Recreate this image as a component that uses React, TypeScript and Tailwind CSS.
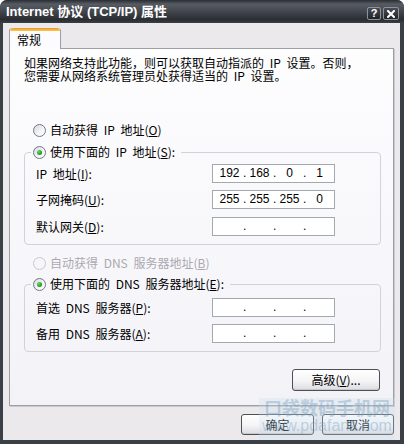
import React from "react";

const CJK = "font-['Noto_Sans_CJK_SC',sans-serif]";

function Radio({ checked, disabled }: { checked?: boolean; disabled?: boolean }) {
  return (
    <span
      className={
        "relative inline-flex h-[13px] w-[13px] shrink-0 items-center justify-center rounded-full border " +
        (disabled
          ? "border-[#cac8cf] bg-[#f6f5f8]"
          : "border-[#6f7a86] bg-[linear-gradient(135deg,#d6d6da_0%,#f2f2f4_50%,#ffffff_100%)]")
      }
    >
      {checked && (
        <span className="h-[5px] w-[5px] rounded-full bg-[radial-gradient(circle_at_35%_35%,#6fd36f_0%,#21a121_60%,#137a13_100%)]" />
      )}
    </span>
  );
}

function IpBox({ parts }: { parts: string[] }) {
  return (
    <div className="flex h-[19px] w-[123px] items-center border border-[#a3a9b0] bg-white pl-[3px] font-['Liberation_Sans',sans-serif] text-[12px] leading-[17px] text-black [word-spacing:0px]">
      {parts.map((p, i) => (
        <React.Fragment key={i}>
          <span className="w-[27px] text-center">{p}</span>
          {i < 3 && <span className="w-[3px] text-center">.</span>}
        </React.Fragment>
      ))}
    </div>
  );
}

function Row({ label, parts, className }: { label: React.ReactNode; parts: string[]; className?: string }) {
  return (
    <div className={"flex h-[19px] items-center " + (className ?? "")}>
      <span className="w-[176px] leading-[16px]">{label}</span>
      <IpBox parts={parts} />
    </div>
  );
}

function Acc({ c }: { c: string }) {
  return (
    <>
      (<span className="underline underline-offset-1">{c}</span>)
    </>
  );
}

function PushButton({ children, w }: { children: React.ReactNode; w: string }) {
  return (
    <div
      className={
        "flex h-[21px] items-center justify-center rounded-[3px] border border-[#4b4f56] bg-[linear-gradient(to_bottom,#ffffff_0%,#f4f4f6_55%,#dcdbe1_100%)] text-[12px] leading-[16px] text-black shadow-[inset_0_-1px_0_#c9c8cf] " +
        w
      }
    >
      {children}
    </div>
  );
}

export default function App() {
  return (
    <div className={"relative h-[444px] w-[404px] bg-white " + CJK}>
      <div className="flex h-[444px] w-[404px] flex-col overflow-hidden rounded-t-[7px] bg-[#3b3f46]">
        {/* Title bar */}
        <div className="flex h-[23px] shrink-0 items-start bg-[linear-gradient(to_bottom,#2a2d32_0%,#575b63_18%,#42464d_50%,#2a2d32_85%,#3a3e45_100%)] pl-[6px] pr-[5px]">
          <div className="mt-[4px] flex-1 font-['Liberation_Sans','Noto_Sans_CJK_SC',sans-serif] text-[13px] font-bold leading-[16px] text-white">
            Internet 协议 (TCP/IP) 属性
          </div>
          <div className="mt-[7px] flex gap-[2px]">
            <div className="flex h-[13px] w-[14px] items-center justify-center rounded-[2px] border border-[#8d939b] bg-[linear-gradient(to_bottom,#4a4e55,#1f2226)] font-['Liberation_Sans',sans-serif] text-[11px] font-bold leading-none text-white">
              ?
            </div>
            <div className="flex h-[13px] w-[16px] items-center justify-center rounded-[2px] border border-[#8d939b] bg-[linear-gradient(to_bottom,#4a4e55,#1f2226)]">
              <svg width="8" height="8" viewBox="0 0 8 8">
                <path d="M1 1 L7 7 M7 1 L1 7" stroke="white" strokeWidth="2" strokeLinecap="square" />
              </svg>
            </div>
          </div>
        </div>

        {/* Body */}
        <div className="mb-[4px] ml-[3px] mr-[4px] flex flex-1 flex-col bg-[#ece9ed] px-[6px] pt-[5px] text-[12px] text-black [word-spacing:3px]">
          {/* Tab strip */}
          <div className="flex h-[20px]">
            <div className="relative z-10 -mb-px flex w-[52px] flex-col overflow-hidden rounded-t-[3px] border-x border-[#9aa0a6] bg-[#fcfcfe]">
              <div className="h-[3px] rounded-t-[3px] bg-[linear-gradient(to_bottom,#e6962d,#ffc84a)]" />
              <div className="pl-[7px] pt-[1px] text-[12px] leading-[16px]">常规</div>
            </div>
          </div>

          {/* Tab panel */}
          <div className="flex h-[358px] flex-col border border-[#9aa0a6] bg-[linear-gradient(to_bottom,#fdfdfe,#f3f2f7)] shadow-[1px_1px_0_#cbc8cf]">
            <p className="ml-[14px] mt-[7px] text-[12px] leading-[13px]">
              如果网络支持此功能，则可以获取自动指派的 IP 设置。否则，
              <br />
              您需要从网络系统管理员处获得适当的 IP 设置。
            </p>

            <div className="ml-[23px] mt-[40px] flex h-[16px] items-center gap-[4px] leading-[16px]">
              <Radio />
              <span>
                自动获得 IP 地址<Acc c="O" />
              </span>
            </div>

            <fieldset className="ml-[14px] mt-[6px] w-[357px] rounded-[4px] border border-[#d4d2d8] pb-[8px] pl-[11px] pt-[4px]">
              <legend className="ml-[-5px] px-[2px] pr-[6px]">
                <span className="flex h-[16px] items-center gap-[4px] leading-[16px]">
                  <Radio checked />
                  <span>
                    使用下面的 IP 地址<Acc c="S" />:
                  </span>
                </span>
              </legend>
              <Row label={<>IP 地址<Acc c="I" />:</>} parts={["192", "168", "0", "1"]} />
              <Row className="mt-[7px]" label={<>子网掩码<Acc c="U" />:</>} parts={["255", "255", "255", "0"]} />
              <Row className="mt-[8px]" label={<>默认网关<Acc c="D" />:</>} parts={["", "", "", ""]} />
            </fieldset>

            <div className="ml-[23px] mt-[10px] flex h-[16px] items-center gap-[4px] leading-[16px] text-[#aca8b0]">
              <Radio disabled />
              <span>
                自动获得 DNS 服务器地址<Acc c="B" />
              </span>
            </div>

            <fieldset className="ml-[14px] mt-[5px] w-[357px] rounded-[4px] border border-[#d4d2d8] pb-[8px] pl-[11px] pt-[6px]">
              <legend className="ml-[-5px] px-[2px] pr-[6px]">
                <span className="flex h-[16px] items-center gap-[4px] leading-[16px]">
                  <Radio checked />
                  <span>
                    使用下面的 DNS 服务器地址<Acc c="E" />:
                  </span>
                </span>
              </legend>
              <Row label={<>首选 DNS 服务器<Acc c="P" />:</>} parts={["", "", "", ""]} />
              <Row className="mt-[7px]" label={<>备用 DNS 服务器<Acc c="A" />:</>} parts={["", "", "", ""]} />
            </fieldset>

            <div className="ml-[14px] mt-[17px] flex w-[357px] justify-end pr-[1px]">
              <PushButton w="w-[88px] h-[22px]">
                高级<Acc c="V" />...
              </PushButton>
            </div>
          </div>

          {/* Dialog buttons */}
          <div className="mt-[8px] flex justify-end gap-[8px]">
            <PushButton w="w-[73px]">确定</PushButton>
            <PushButton w="w-[72px]">取消</PushButton>
          </div>
        </div>
      </div>

      {/* Watermark overlay */}
      <div className="pointer-events-none absolute left-[259px] top-[398px] flex h-[42px] w-[136px] flex-col items-center bg-[rgba(200,222,236,0.28)]">
        <div className="text-[18px] font-bold leading-[19px] text-[rgba(120,160,190,0.42)]">口袋数码手机网</div>
        <div className="font-['Liberation_Sans',sans-serif] text-[16px] leading-[18px] text-[rgba(120,160,190,0.42)]">
          www.pdafans.com
        </div>
      </div>
    </div>
  );
}
